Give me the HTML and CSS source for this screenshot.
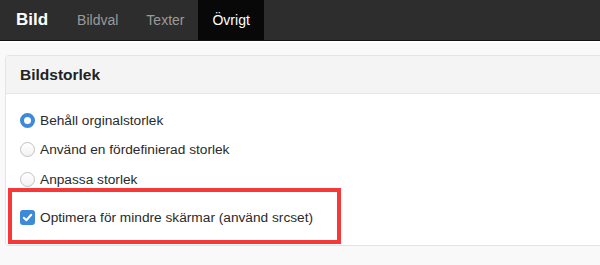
FILE: index.html
```html
<!DOCTYPE html>
<html lang="sv">
<head>
    <meta charset="UTF-8">
    <title>Bild</title>
    <link rel="stylesheet" href="styles.css">
</head>
<body>
    <nav class="navbar">
        <span class="brand">Bild</span>
        <a class="tab">Bildval</a>
        <a class="tab">Texter</a>
        <a class="tab active">Övrigt</a>
    </nav>
    <main class="content">
        <section class="panel">
            <div class="panel-heading">Bildstorlek</div>
            <div class="panel-body">
                <label class="option">
                    <span class="radio checked"></span>
                    Behåll orginalstorlek
                </label>
                <label class="option">
                    <span class="radio"></span>
                    Använd en fördefinierad storlek
                </label>
                <label class="option">
                    <span class="radio"></span>
                    Anpassa storlek
                </label>
                <div class="highlight">
                    <label class="option">
                        <span class="checkbox">
                            <svg viewBox="0 0 15 15" width="15" height="15"><path d="M3.8 7.8 L6.4 10.2 L11.2 4.8" fill="none" stroke="#fff" stroke-width="2.1" stroke-linecap="round" stroke-linejoin="round"/></svg>
                        </span>
                        Optimera för mindre skärmar (använd srcset)
                    </label>
                </div>
            </div>
        </section>
    </main>
</body>
</html>
```

FILE: styles.css
```css
* {
    box-sizing: border-box;
    margin: 0;
    padding: 0;
}

body {
    font-family: 'Liberation Sans', Arial, sans-serif;
    background-color: #f9f9f9;
    color: #2a2a2a;
    overflow: hidden;
}

.navbar {
    display: flex;
    height: 41px;
    background-color: #2d2d2d;
    border-bottom: 1px solid #121212;
}

.brand {
    padding: 0 15px 0 16px;
    line-height: 40px;
    font-size: 17px;
    font-weight: bold;
    color: #fff;
}

.tab {
    padding: 0 14px;
    line-height: 40px;
    font-size: 14px;
    color: #9a9a9a;
}

.active {
    background-color: #080808;
    color: #fff;
}

.content {
    border-top: 2px solid #fff;
    padding: 12px 0 0 5px;
}

.panel {
    width: 620px;
    height: 191px;
    background-color: #fff;
    border: 1px solid #e4e4e4;
    border-radius: 4px;
}

.panel-heading {
    height: 38px;
    padding: 0 14px;
    line-height: 37px;
    font-size: 15.5px;
    font-weight: bold;
    color: #222;
    background-color: #f4f4f4;
    border-bottom: 1px solid #e6e6e6;
    border-radius: 4px 4px 0 0;
}

.panel-body {
    padding: 16px 15px 0 14px;
}

.option {
    display: flex;
    align-items: center;
    gap: 5px;
    height: 20px;
    margin-bottom: 9.5px;
    font-size: 13.7px;
}

.radio {
    width: 15px;
    height: 15px;
    border-radius: 50%;
    border: 1px solid #c2c2c2;
    background: linear-gradient(#fff, #f2f2f2);
}

.radio.checked {
    border: 4.5px solid #3c8ad8;
    background: #fff;
}

.checkbox {
    display: flex;
    width: 15px;
    height: 15px;
    border-radius: 3px;
    background-color: #3c8ad8;
}

.highlight {
    width: 333px;
    height: 56px;
    margin: -10.5px 0 0 -12px;
    padding: 15.5px 0 0 8px;
    border: 4px solid #f53838;
}
```
